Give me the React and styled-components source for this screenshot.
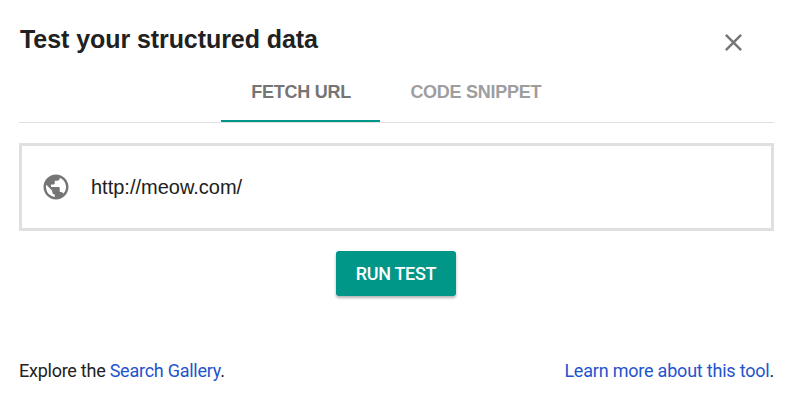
import React from "react";
import styled, { createGlobalStyle, css } from "styled-components";
import { MdClose, MdPublic } from "react-icons/md";

function App() {
  return (
    <>
      <GlobalStyle />
      <Dialog>
        <Header>
          <Title>Test your structured data</Title>
          <CloseButton aria-label="Close">
            <MdClose />
          </CloseButton>
        </Header>
        <Tabs>
          <Tab active>FETCH URL</Tab>
          <Tab>CODE SNIPPET</Tab>
        </Tabs>
        <UrlField>
          <MdPublic />
          <UrlText>http://meow.com/</UrlText>
        </UrlField>
        <RunButton>RUN TEST</RunButton>
        <Footer>
          <FooterText>
            Explore the <Link>Search Gallery</Link>.
          </FooterText>
          <FooterText end>
            <Link>Learn more about this tool</Link>.
          </FooterText>
        </Footer>
      </Dialog>
    </>
  );
}

export default App;

const GlobalStyle = createGlobalStyle`
  * {
    box-sizing: border-box;
  }
  body {
    margin: 0;
    background: white;
    color: #212121;
    font-family: Roboto, sans-serif;
  }
  button {
    border: 0;
    padding: 0;
    background: none;
    font-family: inherit;
  }
`;
const Dialog = styled.main`
  display: flex;
  flex-direction: column;
  width: 790px;
  height: 400px;
  padding: 20px 16px 0 19px;
`;
const Header = styled.header`
  display: flex;
  justify-content: space-between;
  height: 42px;
`;
const Title = styled.h1`
  margin: 0;
  padding-left: 1px;
  font-family: "Liberation Sans", Arial, sans-serif;
  font-size: 25px;
  line-height: 38px;
  letter-spacing: -0.07px;
  white-space: nowrap;
`;
const CloseButton = styled.button`
  display: flex;
  width: 29px;
  height: 29px;
  margin: 7.5px 26px 0 0;
  color: #757575;
  font-size: 29px;
`;
const Tabs = styled.nav`
  display: flex;
  justify-content: center;
  height: 61px;
  padding-right: 1px;
  border-bottom: 1px solid #e0e0e0;
`;
const Tab = styled.button.withConfig({
  shouldForwardProp: (prop) => prop !== "active",
})`
  height: 60px;
  padding: 2px 30px 0;
  border-bottom: 2px solid transparent;
  color: #9e9e9e;
  font-family: "Liberation Sans", Arial, sans-serif;
  font-size: 18px;
  font-weight: bold;
  letter-spacing: -0.27px;
  ${(props) =>
    props.active &&
    css`
      padding: 2px 29.5px 0 30.5px;
      color: #757575;
      border-color: #009688;
    `}
`;
const UrlField = styled.div`
  display: flex;
  align-items: center;
  height: 88px;
  margin-top: 20px;
  padding-left: 19px;
  border: 3px solid #e0e0e0;
  svg {
    width: 30px;
    height: 30px;
    color: #757575;
  }
`;
const UrlText = styled.span`
  margin-left: 20px;
  font-family: "Liberation Sans", Arial, sans-serif;
  font-size: 20px;
`;
const RunButton = styled.button`
  align-self: center;
  width: 120px;
  height: 45px;
  margin: 20px 1px 0 0;
  border-radius: 3px;
  background: #009688;
  color: white;
  font-size: 18px;
  font-weight: 500;
  letter-spacing: -0.3px;
  box-shadow: 0 2px 3px rgba(0, 0, 0, 0.3);
`;
const Footer = styled.footer`
  display: flex;
  justify-content: space-between;
  margin-top: 64px;
  font-size: 18px;
  line-height: 22px;
`;
const FooterText = styled.span.withConfig({
  shouldForwardProp: (prop) => prop !== "end",
})`
  letter-spacing: ${(props) => (props.end ? "-0.21px" : "-0.25px")};
`;
const Link = styled.a`
  color: #1f54cc;
`;
